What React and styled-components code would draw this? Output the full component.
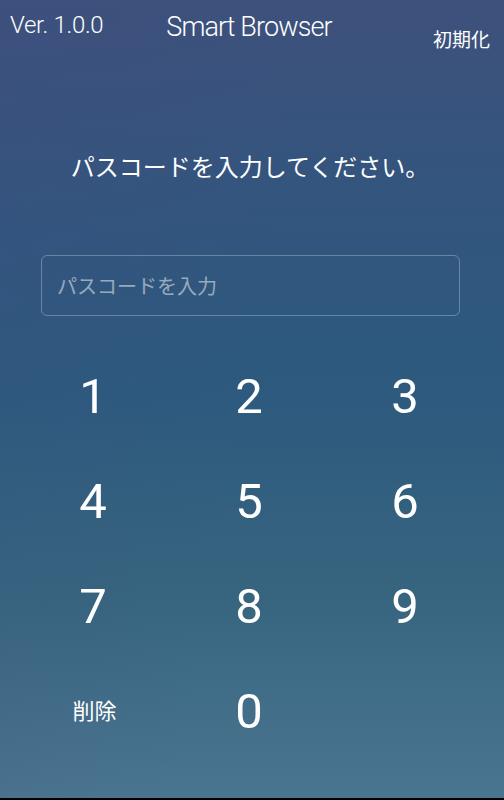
import React from 'react'
import styled, { createGlobalStyle } from 'styled-components'

const GlobalStyle = createGlobalStyle`
    html, body {
        margin: 0;
        padding: 0;
        background: #000;
    }
`;

const Screen = styled.div`
    box-sizing: border-box;
    width: 504px;
    height: 800px;
    border-bottom: 2px solid #000;
    background:
        linear-gradient(100deg, rgba(70, 70, 130, 0.12) 0%, rgba(70, 70, 130, 0) 50%),
        linear-gradient(180deg, #3d517c 0%, #31567e 30%, #2d5a7e 50%, #37657f 75%, #4a7590 100%);
    color: #fff;
    font-family: Roboto, "Noto Sans CJK JP", sans-serif;
    overflow: hidden;
    display: flex;
    flex-direction: column;
`;

const Header = styled.div`
    display: grid;
    grid-template-columns: 1fr auto 1fr;
    align-items: start;
    height: 110px;
    padding: 0 14px 0 10px;
`;

const Version = styled.div`
    margin-top: 13px;
    font-size: 24px;
    font-weight: 300;
    line-height: 1;
    letter-spacing: -0.3px;
    white-space: nowrap;
`;

const Title = styled.div`
    margin-top: 14px;
    margin-right: 2px;
    font-size: 27px;
    font-weight: 300;
    line-height: 1;
    letter-spacing: -0.9px;
    white-space: nowrap;
`;

const ResetButton = styled.div`
    justify-self: end;
    margin-top: 29px;
    font-family: "Noto Sans CJK JP", sans-serif;
    font-size: 19px;
    line-height: 1;
    white-space: nowrap;
`;

const Prompt = styled.div`
    margin-top: 44px;
    text-align: center;
    font-family: "Noto Sans CJK JP", sans-serif;
    font-size: 24px;
    line-height: 1;
    padding-right: 4px;
`;

const PassInput = styled.div`
    box-sizing: border-box;
    margin: 77px 0 0 41px;
    width: 419px;
    height: 61px;
    border: 1px solid rgba(255, 255, 255, 0.28);
    border-radius: 6px;
    display: flex;
    align-items: center;
    padding-left: 15px;
    font-family: "Noto Sans CJK JP", sans-serif;
    font-size: 20px;
    color: rgba(255, 255, 255, 0.5);
`;

const Keypad = styled.div`
    margin: 28px 0 0 15px;
    width: 468px;
    display: grid;
    grid-template-columns: repeat(3, 156px);
    grid-auto-rows: 105px;
`;

const Key = styled.div`
    display: flex;
    align-items: center;
    justify-content: center;
    font-family: ${p => p.$label ? '"Noto Sans CJK JP", sans-serif' : 'Roboto, sans-serif'};
    font-size: ${p => p.$label ? '22px' : '49px'};
    line-height: 1;
    padding-left: ${p => p.$label ? '3px' : '0'};
    padding-bottom: ${p => p.$label ? '5px' : '0'};
`;

const keys = ['1', '2', '3', '4', '5', '6', '7', '8', '9', '削除', '0', ''];

function App () {
    return (
        <Screen>
            <GlobalStyle />
            <Header>
                <Version>Ver. 1.0.0</Version>
                <Title>Smart Browser</Title>
                <ResetButton>初期化</ResetButton>
            </Header>
            <Prompt>パスコードを入力してください。</Prompt>
            <PassInput>パスコードを入力</PassInput>
            <Keypad>
                {keys.map((k, i) => (
                    <Key key={i} $label={k.length > 1}>{k}</Key>
                ))}
            </Keypad>
        </Screen>
    )
}

export default App;
